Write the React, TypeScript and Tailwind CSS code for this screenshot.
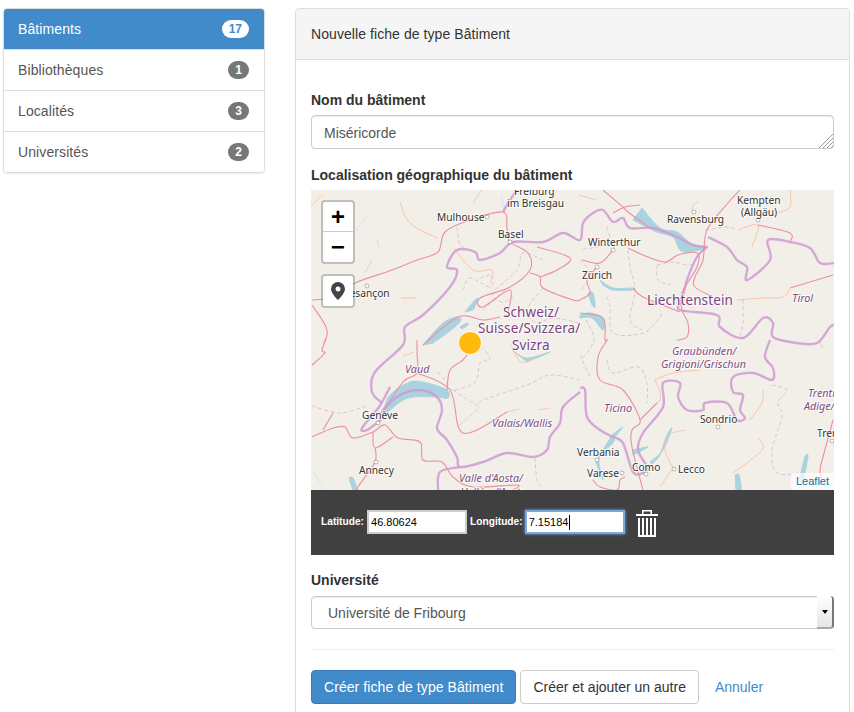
const items = [
  { name: 'Bâtiments', count: 17, active: true },
  { name: 'Bibliothèques', count: 1 },
  { name: 'Localités', count: 3 },
  { name: 'Universités', count: 2 },
];

// map lines, in map pixels (523 x 300)
const countryBorders = [
  '71,213 61,202 64,182 92,155 94,137 112,125 139,97 146,80 136,77 146,60 164,62 169,70 189,63 202,52 232,52 252,43 269,50 272,33 282,23 292,20 302,32 312,28 319,38 342,38 366,47 382,55 396,57',
  '396,57 386,67 376,90 371,110 369,120 406,125 409,137 432,148 452,128 462,133 462,147 486,153 506,153 519,137 523,135',
  '397,47 416,57 426,70 436,77 436,90 459,70 457,50 479,52 499,58 509,73 523,73',
  '459,150 454,167 462,178 461,190 442,183 422,187 422,202 432,205 429,220 434,228 426,230 416,213 394,213 392,220 376,220 367,207 369,193 352,193 352,217 332,243 327,260 336,277 332,283 322,282 312,253 302,247 289,240 276,227 274,200 269,198',
  '269,202 252,217 249,233 239,247 236,260 222,267 196,263 172,272 149,277 146,267 136,250 129,243 126,237 131,220 126,207 109,200 89,205 72,220 71,228 56,240 51,238 68,217 79,197',
  '149,277 129,282 127,300',
  '192,22 199,10 206,0',
];

const regionBorders = [
  '1,216 29,223 56,216',
  '146,37 149,55 156,57',
  '169,88 181,85 179,97 159,88 152,100',
  '232,70 212,63 206,80 182,103 191,112 202,107',
  '232,98 216,120 226,133 242,128 269,133',
  '127,182 136,193 142,200 164,192 169,173 179,170 172,158',
  '142,200 166,215 172,210 216,195 239,185 269,190',
  '149,235 169,217',
  '224,268 226,290 231,297',
  '296,37 297,53 269,60',
  '317,60 319,77 324,100 319,130 331,140',
  '346,75 362,72 379,75 386,67',
  '346,75 347,90 359,95',
  '296,107 299,117 302,143 332,143 349,127 349,120',
  '432,110 432,133 429,147',
  '394,40 416,37 426,40',
  '296,170 302,183 327,177 336,193 336,213',
  '269,165 279,187',
  '461,195 476,200 467,212 471,227 461,260 466,283 489,283',
  '172,120 196,98',
  '269,70 280,85 270,100',
  '275,130 283,150 270,170',
];

const roads = [
  '1,110 22,107 44,93 81,80 106,70 127,62 134,42 159,30 192,22 196,38 199,52 217,63 219,80 199,97 169,108 172,117 199,100 197,123',
  '219,83 229,87 232,98 262,110 269,110',
  '226,57 259,68 246,80 229,87',
  '1,115 16,140 11,160 14,163 1,175',
  '112,155 147,127 172,130 189,127',
  '106,150 106,163 106,183 92,192 72,222',
  '106,183 139,200 152,243 196,222',
  '159,160 152,170 139,180 136,200',
  '1,247 22,238 34,237 42,248 62,242 74,235 87,248 109,252 112,270 131,272 142,287 162,297 206,295 202,300',
  '62,242 64,258 82,247',
  '64,258 64,272 47,297 47,300',
  '12,240 22,223',
  '292,0 312,17 317,22 339,38',
  '302,23 314,17 329,15',
  '429,0 417,13 396,40 392,70 384,87 384,97 402,107',
  '447,35 479,43 479,52',
  '317,58 332,65 354,72 367,65 386,63 386,77 371,103 371,120 377,133 376,147 366,150',
  '302,60 289,73 271,70',
  '286,77 276,90 279,103 269,110',
  '322,98 332,107 369,122',
  '269,123 292,128 294,150 296,150 287,167 289,190 312,200 329,230 321,240 321,257 332,300',
  '329,230 346,213',
  '282,290 289,297 306,300 309,290 314,287',
  '522,230 512,267 509,280 511,290',
  '479,98 522,85',
];

const minorRoads = [
  '89,12 99,33 126,48',
  '61,70 54,83',
  '162,13 171,0',
  '142,57 162,80 181,80 179,93',
  '66,50 68,57',
  '426,110 452,108 472,107 479,98',
  '387,12 382,15 381,22',
  '479,0 479,17 466,23',
  '427,40 447,35 441,57',
  '344,190 349,202 349,210 346,213',
  '344,190 362,183 389,180',
  '439,230 451,213 452,200',
  '447,248 451,260 422,283',
  '362,278 349,297',
  '362,278 354,260 357,245 374,240',
  '196,222 208,219',
  '227,220 239,218',
  '92,166 103,162',
  '12,156 14,148',
  '508,150 512,158',
  '0,16 12,4',
  '90,108 105,108',
  '285,10 268,5',
  '200,155 210,172 225,168',
];

const rivers = ['56,26 43,43 35,50', '38,290 45,300', '1,280 14,300', '190,5 193,20'];

const lakes = [
  '112,155 132,133 147,127 149,132 136,143 122,153',
  '154,122 164,110 167,110 162,120',
  '149,137 156,133 157,135 151,139',
  '72,222 79,205 99,192 116,193 136,200 137,208 126,207 102,207 89,212 77,222',
  '331,18 349,38 366,42 382,55 397,57 379,62 369,60 362,47 346,42 322,30',
  '289,90 302,98 322,98 321,100 302,100 292,95',
  '277,103 282,103 284,117 281,115',
  '269,125 279,123 292,128 292,140 281,128 269,128',
  '201,160 216,168 239,162 216,172',
  '301,245 312,237 304,247 302,253 288,268 292,290 285,272',
  '339,272 352,260 361,238 355,247 349,265 341,274',
  '322,260 337,257 322,265',
  '424,285 428,285 430,300 425,300',
  '494,266 497,266 492,290 488,290',
  '38,288 42,288 46,300 42,300',
];

const cities = [
  { t: 'Freiburg', x: 203, y: 5 },
  { t: 'im Breisgau', x: 196, y: 17 },
  { t: 'Mulhouse', x: 126, y: 31, dot: [176, 27] },
  { t: 'Basel', x: 187, y: 48, dot: [199, 52] },
  { t: 'Besançon', x: 32, y: 107, dot: [56, 96] },
  { t: 'Winterthur', x: 277, y: 56, dot: [302, 60] },
  { t: 'Ravensburg', x: 356, y: 33, dot: [383, 22] },
  { t: 'Kempten', x: 426, y: 14 },
  { t: '(Allgäu)', x: 430, y: 26, dot: [447, 30] },
  { t: 'Zürich', x: 271, y: 89, dot: [286, 77] },
  { t: 'Sondrio', x: 389, y: 233, dot: [407, 237] },
  { t: 'Trento', x: 506, y: 247, dot: [521, 251] },
  { t: 'Verbania', x: 266, y: 266, dot: [286, 270] },
  { t: 'Varese', x: 276, y: 287, dot: [311, 283] },
  { t: 'Como', x: 321, y: 281, dot: [335, 284] },
  { t: 'Lecco', x: 367, y: 283, dot: [363, 279] },
  { t: 'Genève', x: 51, y: 229, dot: [67, 233] },
  { t: 'Annecy', x: 48, y: 284, dot: [65, 272] },
];

const regions = [
  { t: 'Tirol', x: 481, y: 112 },
  { t: 'Graubünden/', x: 361, y: 165 },
  { t: 'Grigioni/Grischun', x: 350, y: 178 },
  { t: 'Trenti', x: 497, y: 207 },
  { t: 'Adige/', x: 493, y: 220 },
  { t: 'Ticino', x: 293, y: 222 },
  { t: 'Vaud', x: 94, y: 183 },
  { t: 'Valais/Wallis', x: 181, y: 237 },
  { t: "Valle d'Aosta/", x: 148, y: 292 },
  { t: "Vallée d'Aoste", x: 150, y: 306 },
];

const countries = [
  { t: 'Schweiz/', x: 192, y: 127 },
  { t: 'Suisse/Svizzera/', x: 167, y: 143 },
  { t: 'Svizra', x: 201, y: 160 },
  { t: 'Liechtenstein', x: 336, y: 115 },
];

// rounds the corners of a point list so the lines read like roads
function smooth(points: string) {
  const p = points.split(' ').map((s) => s.split(',').map(Number));
  let d = `M${p[0][0]} ${p[0][1]}`;
  for (let i = 0; i < p.length - 1; i++) {
    const a = p[Math.max(i - 1, 0)];
    const b = p[i];
    const c = p[i + 1];
    const e = p[Math.min(i + 2, p.length - 1)];
    d += ` C${b[0] + (c[0] - a[0]) / 6} ${b[1] + (c[1] - a[1]) / 6} ${c[0] - (e[0] - b[0]) / 6} ${c[1] - (e[1] - b[1]) / 6} ${c[0]} ${c[1]}`;
  }
  return d;
}

function MapDrawing() {
  return (
    <svg viewBox="0 0 523 300" className="block w-full h-full">
      <rect width="523" height="300" fill="#f2efe9" />
      {rivers.map((p) => (
        <path key={p} d={smooth(p)} fill="none" stroke="#d5e8ee" strokeWidth="1" />
      ))}
      {lakes.map((p) => (
        <path key={p} d={smooth(p) + 'Z'} fill="#aad3df" stroke="#aad3df" strokeWidth="1" />
      ))}
      {regionBorders.map((p) => (
        <path key={p} d={smooth(p)} fill="none" stroke="#dfbfdf" strokeWidth="1" strokeDasharray="4 2.5" />
      ))}
      {minorRoads.map((p) => (
        <path key={p} d={smooth(p)} fill="none" stroke="#fbc4a6" strokeWidth="1" />
      ))}
      {countryBorders.map((p) => (
        <path key={p} d={smooth(p)} fill="none" stroke="#cf9bd0" strokeOpacity="0.85" strokeWidth="2.4" strokeLinejoin="round" />
      ))}
      {roads.map((p) => (
        <path key={p} d={smooth(p)} fill="none" stroke="#ec8ea4" strokeWidth="1.1" />
      ))}
      <g className="font-['Noto_Sans',sans-serif] [paint-order:stroke]" stroke="#ffffff" strokeOpacity="0.7" strokeWidth="2">
        {cities.map((c) => (
          <g key={c.t}>
            {c.dot && <circle cx={c.dot[0]} cy={c.dot[1]} r="1.8" fill="#fff" stroke="#555" strokeOpacity="1" strokeWidth="0.8" />}
            <text x={c.x} y={c.y} fontSize="10.2" fill="#333">{c.t}</text>
          </g>
        ))}
        {regions.map((r) => (
          <text key={r.t} x={r.x} y={r.y} fontSize="10.8" fontStyle="italic" fill="#7f4f84">{r.t}</text>
        ))}
        {countries.map((r) => (
          <text key={r.t} x={r.x} y={r.y} fontSize="13.5" letterSpacing="0.1" fill="#7b3f82">{r.t}</text>
        ))}
      </g>
      <circle cx="159" cy="153" r="11.5" fill="#ffb90f" stroke="#ffffff" strokeWidth="1" />
    </svg>
  );
}

function TrashIcon() {
  return (
    <svg viewBox="0 0 22 27" className="w-[22px] h-[27px]" fill="#ffffff">
      <path d="M6 4V0h10v4h6v2H0V4h6zm1.500 0h7V1.500h-7V4z" fillRule="evenodd" />
      <path d="M2 8h2v17h2V8h2v17h2V8h2v17h2V8h2v17h2V8h2v19H2V8z" />
    </svg>
  );
}

export default function App() {
  return (
    <div className="flex h-[712px] overflow-hidden bg-white font-['Liberation_Sans',Arial,sans-serif] text-sm text-[#333]">
      {/* Left column */}
      <div className="w-[262px] ml-[3px] mt-[8px] shrink-0 self-start rounded border border-[#ddd] shadow-[0_1px_2px_rgba(0,0,0,0.08)] overflow-hidden">
        {items.map((item) => (
          <div
            key={item.name}
            className={
              item.active
                ? 'flex items-center justify-between h-[40px] pl-[14px] pr-[15px] bg-[#428bca] text-white'
                : 'flex items-center justify-between h-[41px] pl-[14px] pr-[15px] bg-white text-[#555] border-t border-[#ddd] first:border-t-0'
            }
          >
            <span className="tracking-[0.1px]">{item.name}</span>
            <span
              className={
                item.active
                  ? 'h-[18px] px-[7px] rounded-[10px] bg-white text-[#428bca] text-xs font-bold leading-[18px]'
                  : 'h-[18px] px-[7px] rounded-[10px] bg-[#777] text-white text-xs font-bold leading-[18px]'
              }
            >
              {item.count}
            </span>
          </div>
        ))}
      </div>

      {/* Form panel */}
      <div className="w-[555px] ml-[30px] mt-[8px] shrink-0 self-start rounded border border-[#ddd]">
        <div className="h-[51px] px-[15px] flex items-center bg-[#f5f5f5] border-b border-[#ddd] rounded-t tracking-[0.07px]">
          Nouvelle fiche de type Bâtiment
        </div>
        <div className="px-[15px] pt-[30px] pb-[30px]">
          <label className="block font-bold mb-[5px] leading-5">Nom du bâtiment</label>
          <div className="relative mb-[16px]">
            <textarea
              defaultValue="Miséricorde"
              rows={1}
              className="block w-full h-[34px] pt-[7px] pb-[5px] px-3 rounded border border-[#ccc] text-[#555] leading-5 shadow-[inset_0_1px_1px_rgba(0,0,0,0.075)] resize-none outline-none"
            />
            <svg viewBox="0 0 14 14" className="absolute right-[1px] bottom-[1px] w-[14px] h-[14px]" stroke="#999" strokeWidth="1">
              <path d="M0 14L14 0M4 14L14 4M8 14L14 8M12 14L14 12" />
            </svg>
          </div>

          <label className="block font-bold mb-[5px] leading-5">Localisation géographique du bâtiment</label>
          <div className="relative h-[300px]">
            <MapDrawing />
            <div className="absolute left-[10px] top-[10px] w-[34px] rounded border-2 border-[#00000033] bg-clip-padding">
              <div className="h-[30px] flex items-center justify-center pt-[6px] bg-white rounded-t border-b border-[#ccc] text-black text-[24px] font-bold font-['Liberation_Mono',monospace]">+</div>
              <div className="h-[30px] flex items-center justify-center pt-[5px] bg-white rounded-b text-black text-[24px] font-bold font-['Liberation_Mono',monospace]">−</div>
            </div>
            <div className="absolute left-[10px] top-[84px] w-[34px] h-[34px] rounded border-2 border-[#00000033] bg-clip-padding bg-white flex items-center justify-center">
              <svg viewBox="0 0 14 18" className="w-[14px] h-[18px]">
                <path d="M7 0a7 7 0 0 0-7 7c0 4.500 7 11 7 11s7-6.500 7-11a7 7 0 0 0-7-7zm0 4.500a2.500 2.500 0 1 1 0 5 2.500 2.500 0 0 1 0-5z" fill="#444" fillRule="evenodd" />
              </svg>
            </div>
            <div className="absolute right-0 bottom-0 h-[17px] px-[5px] bg-[#ffffffb3] text-[11px] leading-[17px] text-[#0078a8]">Leaflet</div>
          </div>
          <div className="h-[65px] flex items-center pl-[10px] bg-[#404040] text-white text-[10.2px] font-bold">
            <span>Latitude:</span>
            <input
              readOnly
              value="46.80624"
              className="w-[100px] h-[24px] ml-[3px] -mt-[2px] pl-[2px] bg-white border-2 border-[#ccc] text-black text-[11px] font-normal outline-none"
            />
            <span className="ml-[3px]">Longitude:</span>
            <div className="relative ml-[2px] -mt-[2px]">
              <input
                readOnly
                value="7.15184"
                className="block w-[100px] h-[24px] pl-[2px] bg-white border-2 border-[#7aa7e0] shadow-[0_0_3px_#6fa5e8] text-black text-[11px] font-normal outline-none"
              />
              <span className="absolute left-[44px] top-[5px] w-px h-[15px] bg-black" />
            </div>
            <div className="ml-[11px] mt-[2px]">
              <TrashIcon />
            </div>
          </div>

          <label className="block font-bold mt-[15px] mb-[6px] leading-5">Université</label>
          <div className="relative">
            <select className="block w-full h-[33px] pl-4 rounded border border-[#ccc] bg-white text-[#555] appearance-none outline-none shadow-[inset_0_1px_1px_rgba(0,0,0,0.075)]">
              <option>Université de Fribourg</option>
            </select>
            <div className="absolute right-0 top-0 w-[17px] h-[33px] rounded-r border-r-2 border-b-2 border-r-[#777] border-b-[#aaa] bg-gradient-to-b from-white to-[#e5e5e5] flex items-center justify-center pointer-events-none">
              <span className="w-0 h-0 border-x-[3px] border-x-transparent border-t-[4px] border-t-black" />
            </div>
          </div>

          <hr className="mt-[20px] mb-[20px] border-[#eee]" />

          <div className="flex items-center">
            <button className="h-[34px] px-[12px] rounded border border-[#357ebd] bg-[#428bca] text-white tracking-[0.07px]">Créer fiche de type Bâtiment</button>
            <button className="h-[34px] px-[12px] ml-[4px] rounded border border-[#ccc] bg-white text-[#333]">Créer et ajouter un autre</button>
            <a className="ml-[16px] text-[#428bca]">Annuler</a>
          </div>
        </div>
      </div>
    </div>
  );
}
